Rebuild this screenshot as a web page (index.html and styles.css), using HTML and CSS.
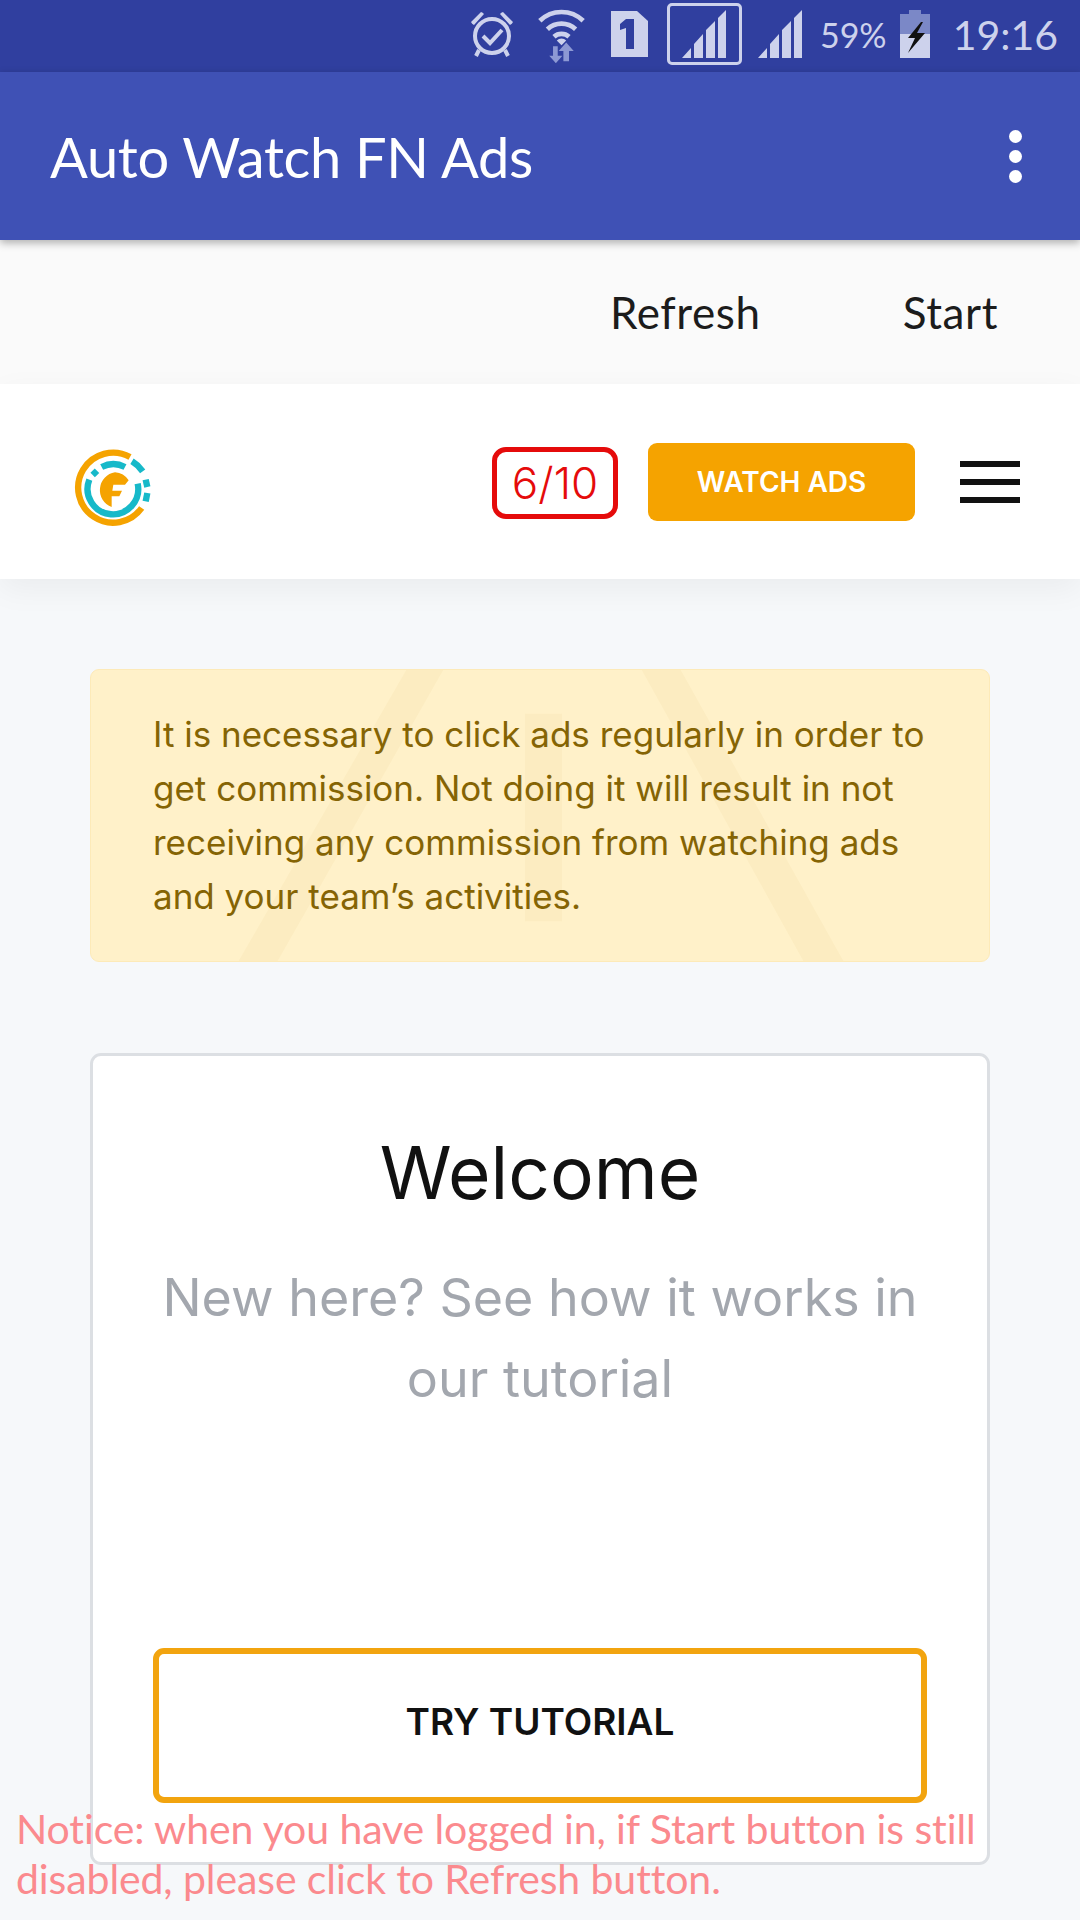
FILE: index.html
```html
<!DOCTYPE html>
<html lang="en">
<head>
<meta charset="utf-8">
<title>Auto Watch FN Ads</title>
<link rel="stylesheet" href="styles.css">
</head>
<body>
<div class="screen">
  <div class="status">
    <svg class="st-alarm" viewBox="0 0 46 50" width="46" height="50"><g fill="#cdd2ec"><path d="M2 13 12 3a5 5 0 0 1 3 2L5 16a5 5 0 0 1-3-3zM44 13 34 3a5 5 0 0 0-3 2l10 11a5 5 0 0 0 3-3z"/></g><circle cx="23" cy="27" r="17" fill="none" stroke="#cdd2ec" stroke-width="4"/><path d="M14 27l7 7 12-13" fill="none" stroke="#cdd2ec" stroke-width="4"/><path d="M10 41l-3 6M36 41l3 6" stroke="#cdd2ec" stroke-width="4"/></svg>
    <svg class="st-wifi" viewBox="0 0 52 58" width="49" height="58"><g fill="none" stroke="#cdd2ec" stroke-width="5"><path d="M3 15a33 33 0 0 1 46 0"/><path d="M11 24a22 22 0 0 1 30 0"/><path d="M18 32a12 12 0 0 1 16 0"/></g><path d="M21 36a7 7 0 0 1 10 0l-5 5z" fill="#cdd2ec"/><path d="M17 42h5v10h5l-7 8-7-8h4zM31 38l8 9h-5v11h-6V47h-5z" fill="#8d99d4"/></svg>
    <svg class="st-sim" viewBox="0 0 37 46" width="37" height="46"><path d="M0 0h26l11 10v36H0z" fill="#cdd2ec"/><path d="M15 8h8v30h-8V17l-6 2v-6z" fill="#303f9f"/></svg>
    <div class="st-box"><svg viewBox="0 0 44 48" width="48" height="48"><path d="M0 48l9-10v10zM12 48V34l9-10v24zM24 48V20l9-9v37zM36 48V8l8-8v48z" fill="#cdd2ec"/></svg></div>
    <svg class="st-signal" viewBox="0 0 44 48" width="48" height="48"><path d="M0 48l9-10v10zM12 48V34l9-10v24zM24 48V20l9-9v37zM36 48V8l8-8v48z" fill="#cdd2ec"/></svg>
    <span class="st-pct">59%</span>
    <svg class="st-batt" viewBox="0 0 30 48" width="30" height="48"><path d="M9 0h12v4h9v20H0V4h9z" fill="#7b88c7"/><path d="M0 24h30v24H0z" fill="#cdd2ec"/><path d="M21 12 8 28h7L8 43l17-20h-8l6-11z" fill="#111"/></svg>
    <span class="st-time">19:16</span>
  </div>
  <header class="appbar">
    <span class="appbar-title">Auto Watch FN Ads</span>
    <span class="dots"><i></i><i></i><i></i></span>
  </header>
  <nav class="actions">
    <span class="action">Refresh</span>
    <span class="action">Start</span>
  </nav>
  <div class="topbar">
    <svg class="logo" viewBox="0 0 300 300" width="100" height="100">
      <g fill="none" stroke-width="19">
        <path d="M210 42A105 105 0 1 0 245 195" stroke="#f5a300"/>
        <g stroke="#17b9c9">
          <path d="M233 122A76 76 0 1 1 88 110"/>
          <path d="M98 96l13-13"/>
          <path d="M125 72A76 76 0 0 1 195 72"/>
          <path d="M216 55A105 105 0 0 1 248 85"/>
          <path d="M257 110L262 132"/>
          <path d="M262 150L257 175"/>
        </g>
      </g>
      <path d="M165 88A54 54 0 0 0 155 192L155 160L178 160L186 143L157 143L160 125L195 125L206 112A54 54 0 0 0 165 88z" fill="#f5a300"/>
    </svg>
    <div class="topbar-right">
      <span class="counter">6/10</span>
      <span class="watch">WATCH ADS</span>
      <span class="burger"><i></i><i></i><i></i></span>
    </div>
  </div>
  <main class="content">
    <section class="alert">
      <svg class="alert-mark" viewBox="0 0 900 293" preserveAspectRatio="none"><path d="M316 0h37L187 293h-39zM552 0h39l163 293h-40zM435 44h37v209h-37z" fill="#c9a24a" opacity=".06"/></svg>
      <p class="alert-text">It is necessary to click ads regularly in order to get commission. Not doing it will result in not receiving any commission from watching ads and your team’s activities.</p>
    </section>
    <section class="card">
      <h1 class="card-title">Welcome</h1>
      <p class="card-sub">New here? See how it works in our tutorial</p>
      <a class="try">TRY TUTORIAL</a>
    </section>
  </main>
  <p class="notice">Notice: when you have logged in, if Start button is still disabled, please click to Refresh button.</p>
</div>
</body>
</html>
```
FILE: styles.css
```css
* { box-sizing: border-box; }
html, body { margin: 0; padding: 0; }
body { width: 1080px; height: 1920px; overflow: hidden; background: #f6f8fa; font-family: Inter, "Noto Sans", sans-serif; }
.screen { position: relative; width: 1080px; height: 1920px; overflow: hidden; }

.status { height: 72px; background: #303f9f; display: flex; align-items: center; justify-content: flex-end; padding: 0 22px 4px 0; color: #cdd2ec; }
.st-alarm { margin-right: 22px; }
.st-wifi { margin-right: 25px; }
.st-sim { margin-right: 19px; }
.st-box { width: 75px; height: 62px; border: 3px solid #cdd2ec; border-radius: 5px; display: flex; align-items: flex-end; justify-content: center; padding-bottom: 4px; margin-right: 14px; }
.st-signal { margin-right: 16px; }
.st-pct { font: 34px "Lato", sans-serif; margin-right: 13px; }
.st-batt { margin-right: 23px; }
.st-time { font: 41px "Lato", sans-serif; }

.appbar { height: 168px; background: #3f51b5; display: flex; align-items: center; justify-content: space-between; padding: 0 58px 0 50px; box-shadow: 0 3px 8px rgba(0,0,0,.3); position: relative; }
.appbar-title { font: 56px "Lato", sans-serif; color: #fff; letter-spacing: -.3px; }
.dots { display: flex; flex-direction: column; gap: 7px; }
.dots i { display: block; width: 13px; height: 13px; border-radius: 50%; background: #fff; }

.actions { height: 144px; background: #fafafa; display: flex; align-items: center; justify-content: flex-end; gap: 142px; padding-right: 82px; }
.action { font: 44px "Lato", sans-serif; color: #1c1c1c; letter-spacing: .6px; }

.topbar { height: 195px; background: #fff; display: flex; align-items: center; justify-content: space-between; padding: 0 60px; box-shadow: 0 10px 30px rgba(0,0,0,.05); position: relative; }
.logo { display: block; margin-top: 23px; }
.topbar-right { display: flex; align-items: center; }
.counter { width: 126px; height: 72px; border: 5px solid #e50b0b; border-radius: 14px; color: #e50b0b; font-size: 44px; font-weight: 300; display: flex; align-items: center; justify-content: center; margin-right: 30px; margin-top: 2px; }
.watch { width: 267px; height: 78px; background: #f5a300; border-radius: 9px; color: #fff; font-size: 28px; font-weight: 600; display: flex; align-items: center; justify-content: center; margin-right: 45px; margin-top: 1px; }
.burger { display: flex; flex-direction: column; gap: 12px; }
.burger i { display: block; width: 60px; height: 6px; background: #111; }

.content { padding: 90px 90px 0; }
.alert { position: relative; height: 293px; background: #fff1c9; border: 1px solid #fdeab8; border-radius: 9px; padding: 37px 62px 0; overflow: hidden; }
.alert-mark { position: absolute; inset: 0; width: 100%; height: 100%; }
.alert-text { position: relative; margin: 0; font-size: 35px; line-height: 54px; color: #856404; }
.card { height: 812px; margin-top: 91px; background: #fff; border: 3px solid #dcdfe3; border-radius: 11px; padding: 72px 30px 0; display: flex; flex-direction: column; align-items: center; text-align: center; }
.card-title { margin: 0; font-size: 73px; line-height: 90px; font-weight: 400; color: #111; }
.card-sub { margin: 39px 0 0; font-size: 52px; line-height: 81px; color: #a3a7ae; }
.try { margin-top: 229px; width: 774px; height: 155px; flex: none; border: 6px solid #f2a40f; border-radius: 11px; padding-bottom: 8px; display: flex; align-items: center; justify-content: center; font-size: 37px; font-weight: 600; color: #111; }

.notice { position: absolute; left: 16px; top: 1804px; width: 1000px; margin: 0; font: 41px/50px "Lato", sans-serif; color: #fb8a8e; letter-spacing: -.1px; }
```
